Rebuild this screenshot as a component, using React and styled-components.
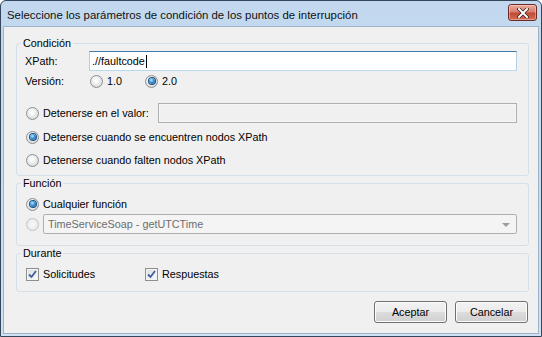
import React from "react";
import styled, { createGlobalStyle } from "styled-components";

const GlobalStyle = createGlobalStyle`
  html, body {
    margin: 0;
    padding: 0;
    background: #ffffff;
  }
  * {
    box-sizing: border-box;
  }
`;

function Radio({ checked, disabled }) {
  return (
    <SRadio $disabled={disabled}>
      {checked && <SDot />}
    </SRadio>
  );
}

function Check() {
  return (
    <SCheck>
      <svg width="9" height="9" viewBox="0 0 9 9">
        <path d="M1 4.5 L3.5 7 L8 1" fill="none" stroke="#3f5f9e" strokeWidth="1.8" />
      </svg>
    </SCheck>
  );
}

export default function App() {
  return (
    <>
      <GlobalStyle />
      <SWindow>
        <STitleBar>
          <STitle>Seleccione los parámetros de condición de los puntos de interrupción</STitle>
          <SClose>
            <svg width="12" height="10" viewBox="0 0 12 10">
              <path d="M2 1 L10 9 M10 1 L2 9" stroke="#3b1a1a" strokeWidth="3.4" strokeLinecap="square" />
              <path d="M2 1 L10 9 M10 1 L2 9" stroke="#ffffff" strokeWidth="2" strokeLinecap="square" />
            </svg>
          </SClose>
        </STitleBar>

        <SBody>
          <SGroup>
            <SLegend>Condición</SLegend>

            <SRow $top={1} $h={20}>
              <SFieldLabel>XPath:</SFieldLabel>
              <STextBox>
                .//faultcode<SCaret />
              </STextBox>
            </SRow>

            <SRow $top={1} $h={18}>
              <SFieldLabel>Versión:</SFieldLabel>
              <SOption $w={55} $left={1}>
                <Radio />
                <span>1.0</span>
              </SOption>
              <SOption>
                <Radio checked />
                <span>2.0</span>
              </SOption>
            </SRow>

            <SRow $top={13} $h={20}>
              <SOption $w={132} $left={1}>
                <Radio />
                <span>Detenerse en el valor:</span>
              </SOption>
              <SDisabledBox />
            </SRow>

            <SRow $top={5} $h={18}>
              <SOption $left={1}>
                <Radio checked />
                <span>Detenerse cuando se encuentren nodos XPath</span>
              </SOption>
            </SRow>

            <SRow $top={5} $h={18}>
              <SOption $left={1}>
                <Radio />
                <span>Detenerse cuando falten nodos XPath</span>
              </SOption>
            </SRow>
          </SGroup>

          <SGroup $bottom={11}>
            <SLegend>Función</SLegend>

            <SRow $top={5} $h={18}>
              <SOption $left={1}>
                <Radio checked />
                <span>Cualquier función</span>
              </SOption>
            </SRow>

            <SRow $top={1} $h={20}>
              <SOption $left={1}>
                <Radio disabled />
              </SOption>
              <SCombo>
                <span>TimeServiceSoap - getUTCTime</span>
                <SArrow />
              </SCombo>
            </SRow>
          </SGroup>

          <SGroup $bottom={8}>
            <SLegend>Durante</SLegend>

            <SRow $top={5} $h={18}>
              <SOption $w={119} $left={1}>
                <Check />
                <span>Solicitudes</span>
              </SOption>
              <SOption>
                <Check />
                <span>Respuestas</span>
              </SOption>
            </SRow>
          </SGroup>

          <SButtons>
            <SButton>Aceptar</SButton>
            <SButton>Cancelar</SButton>
          </SButtons>
        </SBody>
      </SWindow>
    </>
  );
}

// =========================== STYLES ============================= //

const SWindow = styled.div`
  width: 542px;
  height: 337px;
  display: flex;
  flex-direction: column;
  border: 1px solid #34465a;
  border-radius: 6px 6px 0 0;
  background: linear-gradient(#c2d8ee, #cfe1f3);
  font-family: "Liberation Sans", Arial, sans-serif;
  font-size: 10.8px;
  color: #000;
  overflow: hidden;
`;

const STitleBar = styled.div`
  height: 25px;
  display: flex;
  align-items: center;
  justify-content: space-between;
  padding: 0 4px 0 6px;
`;

const STitle = styled.div`
  font-size: 11.4px;
  color: #111;
  padding-top: 2px;
`;

const SClose = styled.div`
  width: 29px;
  height: 17px;
  margin-top: -2px;
  display: flex;
  align-items: center;
  justify-content: center;
  border: 1px solid #6e2a25;
  border-radius: 3px;
  background: linear-gradient(#e9aa9d 0%, #d8806f 45%, #c34a35 55%, #cf6f55 100%);
  box-shadow: inset 0 0 0 1px rgba(255, 255, 255, 0.35);
`;

const SBody = styled.div`
  flex: 1;
  margin: 0 2px 2px 2px;
  background: #f0f0f0;
  border: 1px solid #9bb3cb;
  padding: 9px 9px 0 12px;
  display: flex;
  flex-direction: column;
`;

const SGroup = styled.fieldset`
  margin: 0;
  padding: 0 11px ${(p) => (p.$bottom != null ? p.$bottom : 6)}px 8px;
  border: 1px solid #d5dfe5;
  border-radius: 3px;
  min-width: 0;
`;

const SLegend = styled.legend`
  margin-left: -4px;
  padding: 0 2px;
  line-height: 14px;
  font-size: 10.8px;
`;

const SRow = styled.div`
  display: flex;
  align-items: center;
  height: ${(p) => p.$h}px;
  margin-top: ${(p) => p.$top}px;
`;

const SFieldLabel = styled.span`
  width: 64px;
  flex: none;
`;

const SOption = styled.label`
  display: inline-flex;
  align-items: center;
  gap: 4px;
  flex: none;
  width: ${(p) => (p.$w ? `${p.$w}px` : "auto")};
  margin-left: ${(p) => p.$left || 0}px;
  white-space: nowrap;
`;

const SRadio = styled.span`
  width: 13px;
  height: 13px;
  flex: none;
  border-radius: 50%;
  border: 1px solid ${(p) => (p.$disabled ? "#c2c2c2" : "#8e8f8f")};
  background: ${(p) =>
    p.$disabled
      ? "radial-gradient(circle at 50% 50%, #f4f4f4 30%, #e2e2e2 100%)"
      : "radial-gradient(circle at 45% 40%, #ffffff 10%, #e3e3e3 60%, #c6c6c6 100%)"};
  display: flex;
  align-items: center;
  justify-content: center;
`;

const SDot = styled.span`
  width: 6px;
  height: 6px;
  border-radius: 50%;
  background: radial-gradient(circle at 40% 35%, #b6e6ff 0%, #3c94d6 45%, #0d4a84 100%);
  box-shadow: 0 0 0 1px #1d4f7e;
`;

const SCheck = styled.span`
  width: 13px;
  height: 13px;
  flex: none;
  border: 1px solid #8e8f8f;
  background: linear-gradient(135deg, #dcdcdc, #fbfbfb);
  box-shadow: inset 0 0 0 1px #f4f4f4;
  display: flex;
  align-items: center;
  justify-content: center;
`;

const STextBox = styled.div`
  flex: 1;
  height: 20px;
  display: flex;
  align-items: center;
  padding-left: 2px;
  background: #fff;
  border: 1px solid;
  border-color: #3d7bad #b5cfe7 #b7d9ed #b5cfe7;
`;

const SCaret = styled.span`
  width: 1px;
  height: 13px;
  background: #000;
  margin-left: 1px;
`;

const SDisabledBox = styled.div`
  flex: 1;
  height: 20px;
  border: 1px solid #afafaf;
  background: #f0f0f0;
  box-shadow: inset 0 0 0 1px #f6f6f6;
`;

const SCombo = styled.div`
  flex: 1;
  height: 20px;
  display: flex;
  align-items: center;
  justify-content: space-between;
  padding: 0 6px 0 4px;
  border: 1px solid #afafaf;
  border-radius: 2px;
  background: #f4f4f4;
  color: #6d6d6d;
  margin-left: 4px;
`;

const SArrow = styled.span`
  width: 0;
  height: 0;
  border-left: 4px solid transparent;
  border-right: 4px solid transparent;
  border-top: 4px solid #9c9c9c;
  margin-top: 2px;
`;

const SButtons = styled.div`
  display: flex;
  justify-content: flex-end;
  gap: 8px;
  margin-top: 9px;
  padding-right: 1px;
`;

const SButton = styled.button`
  width: 73px;
  height: 22px;
  font-family: "Liberation Sans", Arial, sans-serif;
  font-size: 10.8px;
  color: #000;
  border: 1px solid #707070;
  border-radius: 3px;
  background: linear-gradient(#f2f2f2 0%, #ebebeb 50%, #dddddd 51%, #cfcfcf 100%);
  box-shadow: inset 0 0 0 1px #fcfcfc;
  padding: 0;
`;
